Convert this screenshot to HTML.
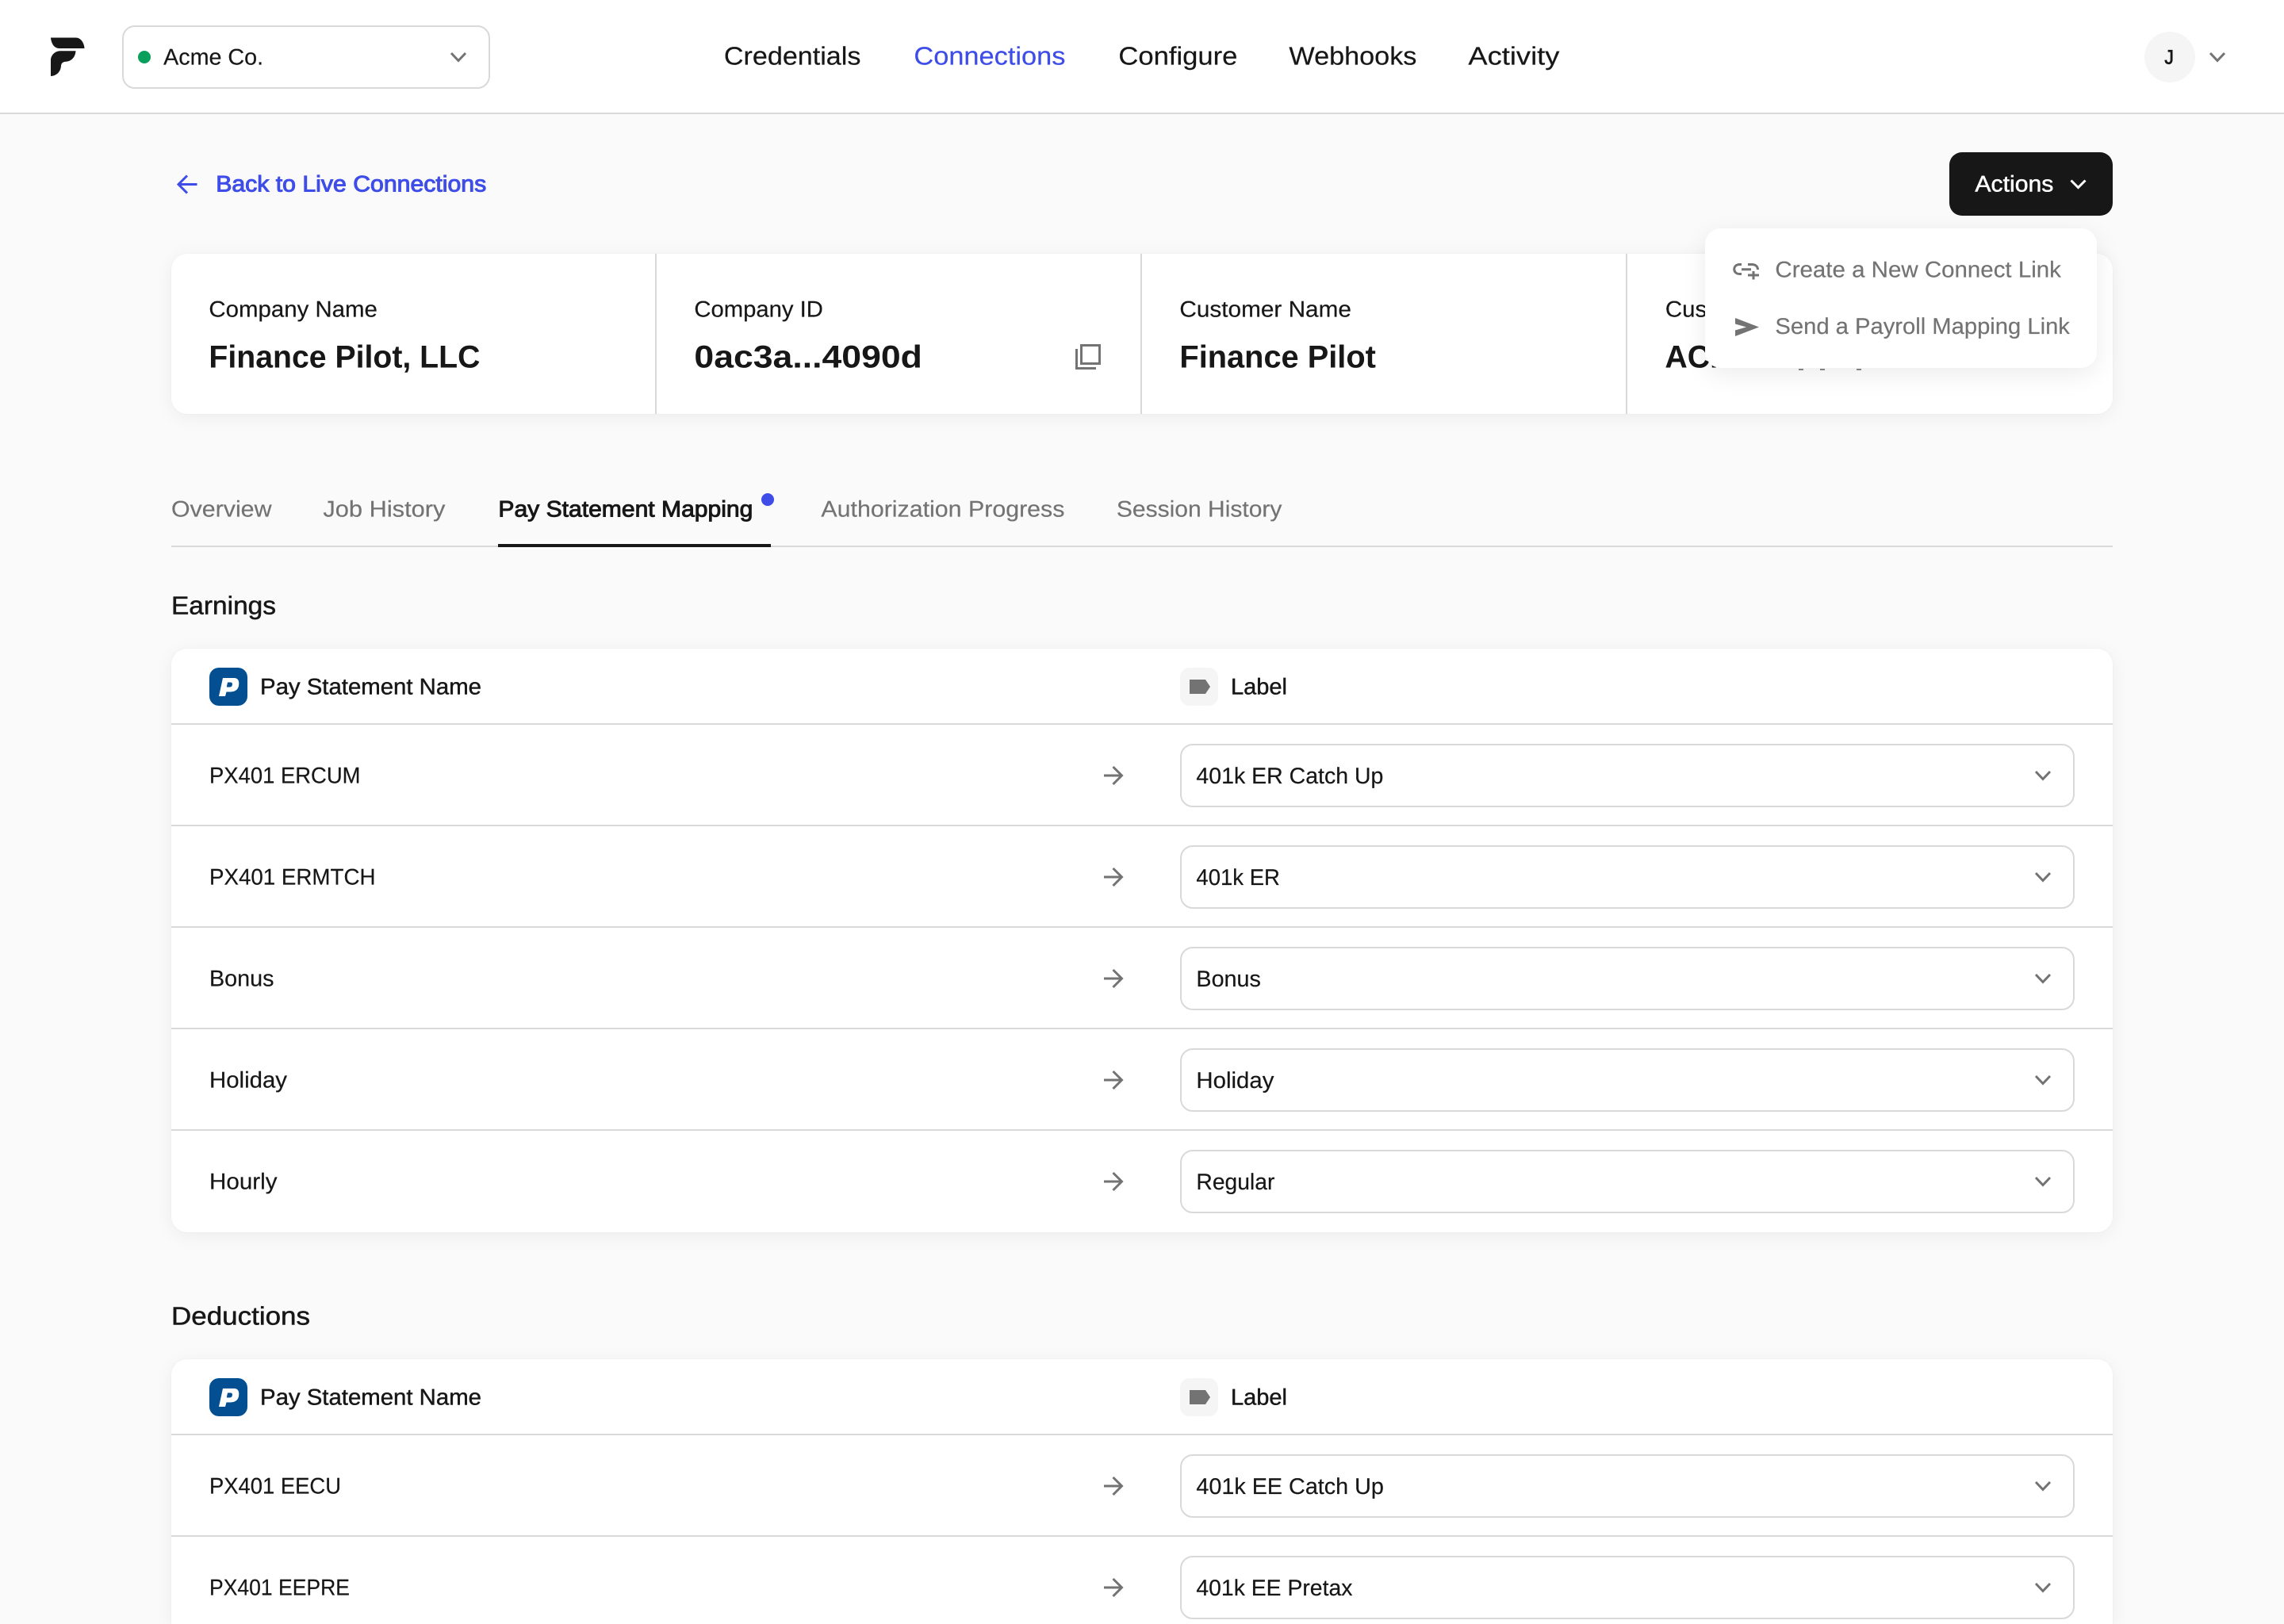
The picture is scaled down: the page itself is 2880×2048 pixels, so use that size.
<!DOCTYPE html>
<html lang="en"><head><meta charset="utf-8"><title>Connections</title>
<style>
*{box-sizing:border-box;margin:0;padding:0}
html,body{width:2880px;height:2048px;overflow:hidden;background:#fafafa}
#p{position:relative;width:2880px;height:2048px;overflow:hidden;background:#fafafa}
.a{position:absolute}
.card{position:absolute;left:216px;width:2448px;background:#fff;border-radius:20px;box-shadow:0 4px 24px rgba(0,0,0,.06),0 0 2px rgba(0,0,0,.04)}
.ln{position:absolute;background:#d9d9d9;height:2px}
.sel{position:absolute;left:1488px;width:1128px;height:80px;border:2px solid #d9d9d9;border-radius:16px;background:#fff}
.ib{position:absolute;left:1488px;width:48px;height:48px;border-radius:12px;background:#f5f5f5}
svg{position:absolute;left:0;top:0}
text{font-family:"Liberation Sans",sans-serif;font-size:28.5px;fill:#171717;stroke:#171717;stroke-width:.2px;text-rendering:geometricPrecision;transform:translateX(-.6px)}
.g{fill:#737373;stroke:#737373}.b{fill:#3e4ce8;stroke:#3e4ce8}
.v{font-size:40px;font-weight:700;stroke-width:0}
.n{font-size:32px}
.h{font-size:32px;stroke:#171717;stroke-width:.5px}
.t{stroke-width:.45px}
.s{fill:none;stroke:#737373;stroke-width:3}
</style></head><body><div id="p">
<div class="a" style="left:0;top:0;width:2880px;height:144px;background:#fff;border-bottom:2px solid #d9d9d9"></div>
<div class="a" style="left:154px;top:32px;width:464px;height:80px;border:2px solid #d9d9d9;border-radius:16px"></div>
<div class="a" style="left:174px;top:64px;width:16px;height:16px;border-radius:50%;background:#0a9f5c"></div>
<div class="a" style="left:2704px;top:40px;width:64px;height:64px;border-radius:50%;background:#f5f5f5"></div>
<div class="a" style="left:2458px;top:192px;width:206px;height:80px;border-radius:16px;background:#171717"></div>

<div class="card" style="top:320px;height:202px"></div>
<div class="a" style="left:826px;top:320px;width:2px;height:202px;background:#d9d9d9"></div>
<div class="a" style="left:1438px;top:320px;width:2px;height:202px;background:#d9d9d9"></div>
<div class="a" style="left:2050px;top:320px;width:2px;height:202px;background:#d9d9d9"></div>

<div class="ln" style="left:216px;top:688px;width:2448px"></div>
<div class="a" style="left:628px;top:686px;width:344px;height:4px;background:#171717"></div>
<div class="a" style="left:960px;top:622px;width:16px;height:16px;border-radius:50%;background:#3e4ce8"></div>

<div class="card" style="top:818px;height:736px"></div>
<div class="ln" style="left:216px;top:912px;width:2448px"></div>
<div class="ln" style="left:216px;top:1040px;width:2448px"></div>
<div class="ln" style="left:216px;top:1168px;width:2448px"></div>
<div class="ln" style="left:216px;top:1296px;width:2448px"></div>
<div class="ln" style="left:216px;top:1424px;width:2448px"></div>
<div class="ib" style="top:842px"></div>
<div class="sel" style="top:938px"></div>
<div class="sel" style="top:1066px"></div>
<div class="sel" style="top:1194px"></div>
<div class="sel" style="top:1322px"></div>
<div class="sel" style="top:1450px"></div>

<div class="card" style="top:1714px;height:334px;border-radius:20px 20px 0 0"></div>
<div class="ln" style="left:216px;top:1808px;width:2448px"></div>
<div class="ln" style="left:216px;top:1936px;width:2448px"></div>
<div class="ib" style="top:1738px"></div>
<div class="sel" style="top:1834px"></div>
<div class="sel" style="top:1962px"></div>

<svg width="2880" height="2048" viewBox="0 0 2880 2048" style="z-index:1">
<defs>
<g id="chev"><path class="s" d="M-9 -5L0 4.500L9 -5"/></g>
<g id="arr"><path class="s" d="M1392 0H1414M1403.500 -11L1414.500 0L1403.500 11"/></g>
<g id="pp"><rect x="264" y="842" width="48" height="48" rx="12" fill="#044e92"/><path fill="#fff" fill-rule="evenodd" d="M281 855H295C301 855 302 860 301 865C300 870 296 872.500 290 872.500H285.500L284 878H276ZM287 860.500L285.800 866.500H290C293.500 866.500 294 860.500 291 860.500Z"/></g>
<g id="tag"><path fill="#737373" d="M1500 857H1520L1526 866L1520 875H1500Z"/></g>
</defs>

<path fill="#171717" d="M64 47.500H95.500C102 47.500 106 54 106.500 61H74.500C68 61 64.500 54 64 47.500Z"/>
<path fill="#171717" d="M95.500 64.300H76C69 64.300 64 70 64 76V96C72 95.500 76.500 90 77 83C77.300 80 79 78 83 77.800C90 77.500 95 72 95.500 64.300Z"/>

<text x="206.700" y="81.700" textLength="126" lengthAdjust="spacingAndGlyphs">Acme Co.</text>
<use href="#chev" x="578" y="72"/>

<text class="n" x="913.500" y="81.700" textLength="172.500" lengthAdjust="spacingAndGlyphs">Credentials</text>
<text class="n b" x="1153" y="81.700" textLength="191" lengthAdjust="spacingAndGlyphs">Connections</text>
<text class="n" x="1411" y="81.700" textLength="150" lengthAdjust="spacingAndGlyphs">Configure</text>
<text class="n" x="1626" y="81.700" textLength="161" lengthAdjust="spacingAndGlyphs">Webhooks</text>
<text class="n" x="1852" y="81.700" textLength="115" lengthAdjust="spacingAndGlyphs">Activity</text>

<text x="2730" y="80.500" textLength="11.500" lengthAdjust="spacingAndGlyphs" style="font-size:25px;stroke-width:.8px">J</text>
<use href="#chev" x="2796" y="72"/>

<path fill="none" stroke="#3e4ce8" stroke-width="3" d="M225.500 232.500H248.500M236 221.500L225 232.500L236 243.500"/>
<text class="b" x="272.800" y="241.700" textLength="341" lengthAdjust="spacingAndGlyphs" style="stroke-width:1px">Back to Live Connections</text>

<text x="2491" y="241.500" textLength="99" lengthAdjust="spacingAndGlyphs" style="fill:#fff;stroke:#fff;stroke-width:.5px">Actions</text>
<path fill="none" stroke="#fff" stroke-width="3" d="M2611.500 227.500L2620.500 236.500L2629.500 227.500"/>

<text x="264" y="399.500" textLength="212.500" lengthAdjust="spacingAndGlyphs">Company Name</text>
<text x="876" y="399.500" textLength="162.500" lengthAdjust="spacingAndGlyphs">Company ID</text>
<text x="1488" y="399.500" textLength="216.500" lengthAdjust="spacingAndGlyphs">Customer Name</text>
<text x="2100.500" y="399.500" textLength="165" lengthAdjust="spacingAndGlyphs">Customer ID</text>
<text class="v" x="264" y="463.500" textLength="342" lengthAdjust="spacingAndGlyphs">Finance Pilot, LLC</text>
<text class="v" x="876" y="463.500" textLength="287.500" lengthAdjust="spacingAndGlyphs">0ac3a...4090d</text>
<text class="v" x="1488" y="463.500" textLength="247.500" lengthAdjust="spacingAndGlyphs">Finance Pilot</text>
<text class="v" x="2100" y="463.500" textLength="190" lengthAdjust="spacingAndGlyphs">ACME Co.</text>
<path fill="#8a8a8a" d="M2268 465h6v2h-6zM2295 465h6v2h-6zM2341 465h6v2h-6z"/>

<path fill="none" stroke="#737373" stroke-width="3" d="M1363.500 435.500H1386.500V458.500H1363.500ZM1357.500 440V464.500H1382"/>

<text class="g" x="216.600" y="651.700" textLength="126.500" lengthAdjust="spacingAndGlyphs">Overview</text>
<text class="g" x="408" y="651.700" textLength="154" lengthAdjust="spacingAndGlyphs">Job History</text>
<text x="629" y="651.700" textLength="321" lengthAdjust="spacingAndGlyphs" style="stroke-width:.95px">Pay Statement Mapping</text>
<text class="g" x="1036" y="651.700" textLength="307" lengthAdjust="spacingAndGlyphs">Authorization Progress</text>
<text class="g" x="1408.500" y="651.700" textLength="208.500" lengthAdjust="spacingAndGlyphs">Session History</text>

<text class="h" x="216.600" y="774.300" textLength="132" lengthAdjust="spacingAndGlyphs">Earnings</text>
<use href="#pp"/><use href="#tag"/>
<text class="t" x="328.600" y="875.700" textLength="279" lengthAdjust="spacingAndGlyphs">Pay Statement Name</text>
<text class="t" x="1552.600" y="875.700" textLength="71" lengthAdjust="spacingAndGlyphs">Label</text>

<text x="264.600" y="987.700" textLength="190.500" lengthAdjust="spacingAndGlyphs">PX401 ERCUM</text>
<use href="#arr" y="978"/>
<text x="1509" y="988" textLength="236" lengthAdjust="spacingAndGlyphs">401k ER Catch Up</text>
<use href="#chev" x="2576" y="978"/>

<text x="264.600" y="1115.700" textLength="209.500" lengthAdjust="spacingAndGlyphs">PX401 ERMTCH</text>
<use href="#arr" y="1106"/>
<text x="1509" y="1116" textLength="105.500" lengthAdjust="spacingAndGlyphs">401k ER</text>
<use href="#chev" x="2576" y="1106"/>

<text x="264.600" y="1243.700" textLength="81.500" lengthAdjust="spacingAndGlyphs">Bonus</text>
<use href="#arr" y="1234"/>
<text x="1509" y="1244" textLength="81.500" lengthAdjust="spacingAndGlyphs">Bonus</text>
<use href="#chev" x="2576" y="1234"/>

<text x="264.600" y="1371.700" textLength="98" lengthAdjust="spacingAndGlyphs">Holiday</text>
<use href="#arr" y="1362"/>
<text x="1509" y="1372" textLength="98" lengthAdjust="spacingAndGlyphs">Holiday</text>
<use href="#chev" x="2576" y="1362"/>

<text x="264.600" y="1499.700" textLength="85.500" lengthAdjust="spacingAndGlyphs">Hourly</text>
<use href="#arr" y="1490"/>
<text x="1509" y="1500" textLength="99" lengthAdjust="spacingAndGlyphs">Regular</text>
<use href="#chev" x="2576" y="1490"/>

<text class="h" x="216.600" y="1670.300" textLength="175" lengthAdjust="spacingAndGlyphs">Deductions</text>
<use href="#pp" y="896"/><use href="#tag" y="896"/>
<text class="t" x="328.600" y="1771.700" textLength="279" lengthAdjust="spacingAndGlyphs">Pay Statement Name</text>
<text class="t" x="1552.600" y="1771.700" textLength="71" lengthAdjust="spacingAndGlyphs">Label</text>

<text x="264.600" y="1883.700" textLength="166" lengthAdjust="spacingAndGlyphs">PX401 EECU</text>
<use href="#arr" y="1874"/>
<text x="1509" y="1884" textLength="236.500" lengthAdjust="spacingAndGlyphs">401k EE Catch Up</text>
<use href="#chev" x="2576" y="1874"/>

<text x="264.600" y="2011.700" textLength="177" lengthAdjust="spacingAndGlyphs">PX401 EEPRE</text>
<use href="#arr" y="2002"/>
<text x="1509" y="2012" textLength="197" lengthAdjust="spacingAndGlyphs">401k EE Pretax</text>
<use href="#chev" x="2576" y="2002"/>
</svg>

<div class="a" style="left:2150px;top:288px;width:494px;height:176px;background:#fff;border-radius:20px;box-shadow:0 8px 32px rgba(0,0,0,.08);z-index:2"></div>
<svg width="2880" height="2048" viewBox="0 0 2880 2048" style="z-index:3">
<path fill="none" stroke="#737373" stroke-width="3" d="M2196 333.500H2193.500C2184.500 333.500 2184.500 345.500 2193.500 345.500H2196M2196 339.800H2208M2204 333.500H2209C2213.500 333.500 2216.500 336 2216.500 340M2211 342V352.500M2204 347H2218"/>
<path fill="#737373" d="M2188 401L2218 412.500L2188 424V416.500L2202 412.500L2188 408.500Z"/>
<text class="g" x="2239" y="349.300" textLength="360.500" lengthAdjust="spacingAndGlyphs">Create a New Connect Link</text>
<text class="g" x="2239" y="421" textLength="371.500" lengthAdjust="spacingAndGlyphs">Send a Payroll Mapping Link</text>
</svg>
</div></body></html>
